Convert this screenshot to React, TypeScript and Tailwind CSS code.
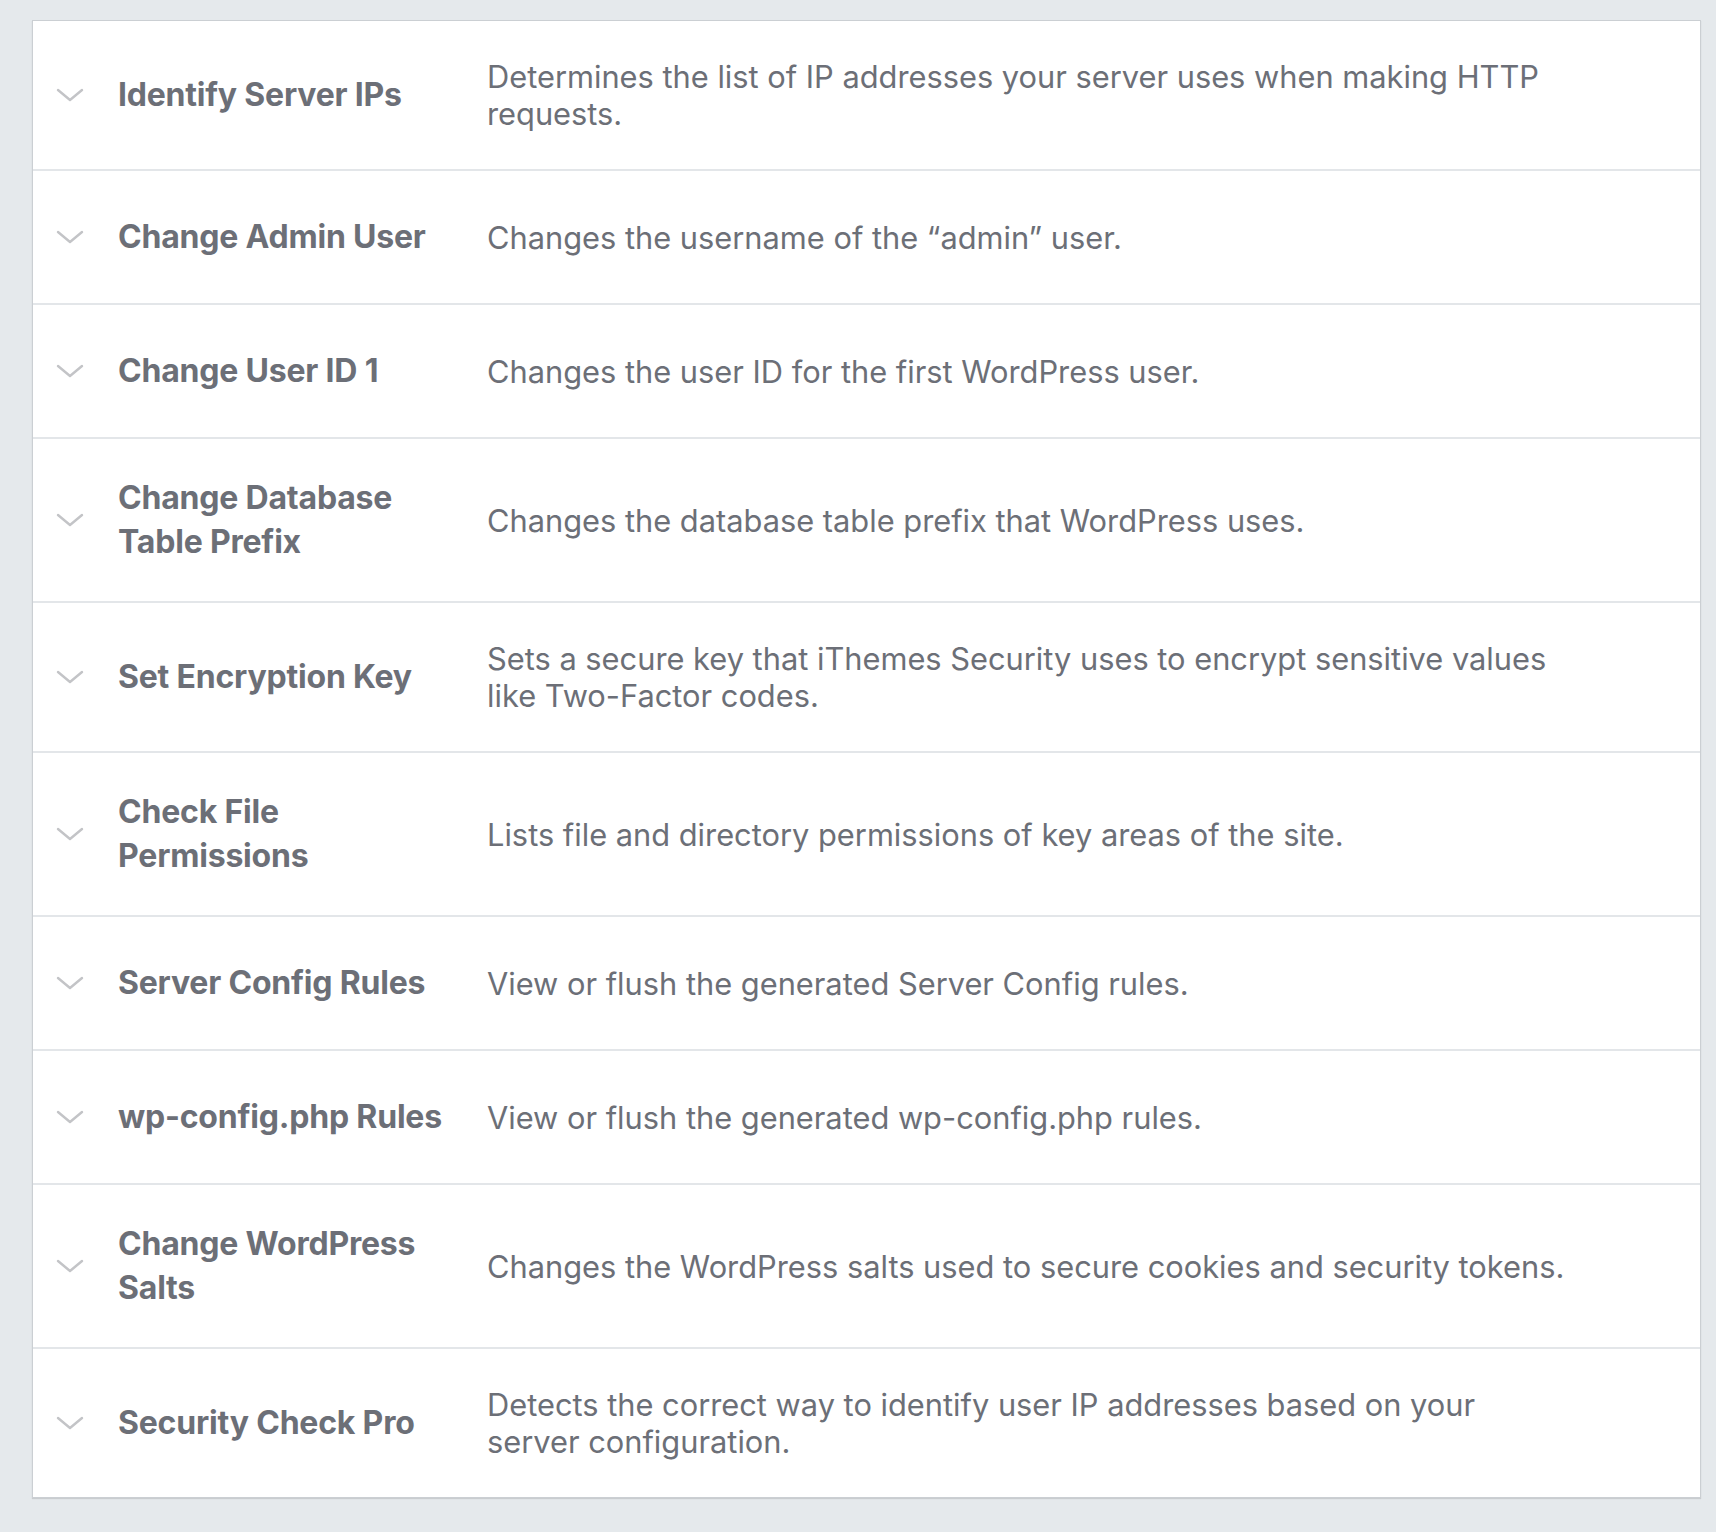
const rows = [
  {
    title: 'Identify Server IPs',
    description: 'Determines the list of IP addresses your server uses when making HTTP requests.',
  },
  { title: 'Change Admin User', description: 'Changes the username of the “admin” user.' },
  { title: 'Change User ID 1', description: 'Changes the user ID for the first WordPress user.' },
  {
    title: 'Change Database Table Prefix',
    description: 'Changes the database table prefix that WordPress uses.',
  },
  {
    title: 'Set Encryption Key',
    description: 'Sets a secure key that iThemes Security uses to encrypt sensitive values like Two-Factor codes.',
  },
  {
    title: 'Check File Permissions',
    description: 'Lists file and directory permissions of key areas of the site.',
  },
  { title: 'Server Config Rules', description: 'View or flush the generated Server Config rules.' },
  { title: 'wp-config.php Rules', description: 'View or flush the generated wp-config.php rules.' },
  {
    title: 'Change WordPress Salts',
    description: 'Changes the WordPress salts used to secure cookies and security tokens.',
  },
  {
    title: 'Security Check Pro',
    description: 'Detects the correct way to identify user IP addresses based on your server configuration.',
  },
]

function Chevron() {
  return (
    <svg width="28" height="16" viewBox="0 0 28 16" fill="none" aria-hidden="true">
      <path d="M2 3l12 10 12-10" stroke="#c3c4c7" strokeWidth="2.4" strokeLinecap="round" strokeLinejoin="round" />
    </svg>
  )
}

export default function App() {
  return (
    <div
      className="min-h-screen bg-[#e5e9ec] pt-[20px] pb-[34px] pl-[32px] pr-[15px]"
      style={{ fontFamily: 'Inter, "Noto Sans", sans-serif' }}
    >
      <div className="border border-[#cbcfd3] bg-white shadow-[0_1px_1px_rgba(0,0,0,0.12)]">
        {rows.map((row, i) => (
          <div
            key={row.title}
            className={
              i < rows.length - 1
                ? 'flex items-center border-b-2 border-[#e3e6e9] py-[37px]'
                : 'flex items-center py-[37px]'
            }
          >
            <div className="flex h-[58px] w-[85px] shrink-0 items-center pl-[23px]">
              <Chevron />
            </div>
            <div className="w-[340px] shrink-0 text-[32px] font-bold leading-[44px] tracking-[-0.2px] text-[#6c6f77]">
              {row.title}
            </div>
            <div className="w-[1113px] pl-[29px] text-[30.8px] leading-[37px] text-[#6c6f77]">
              {row.description}
            </div>
          </div>
        ))}
      </div>
    </div>
  )
}
